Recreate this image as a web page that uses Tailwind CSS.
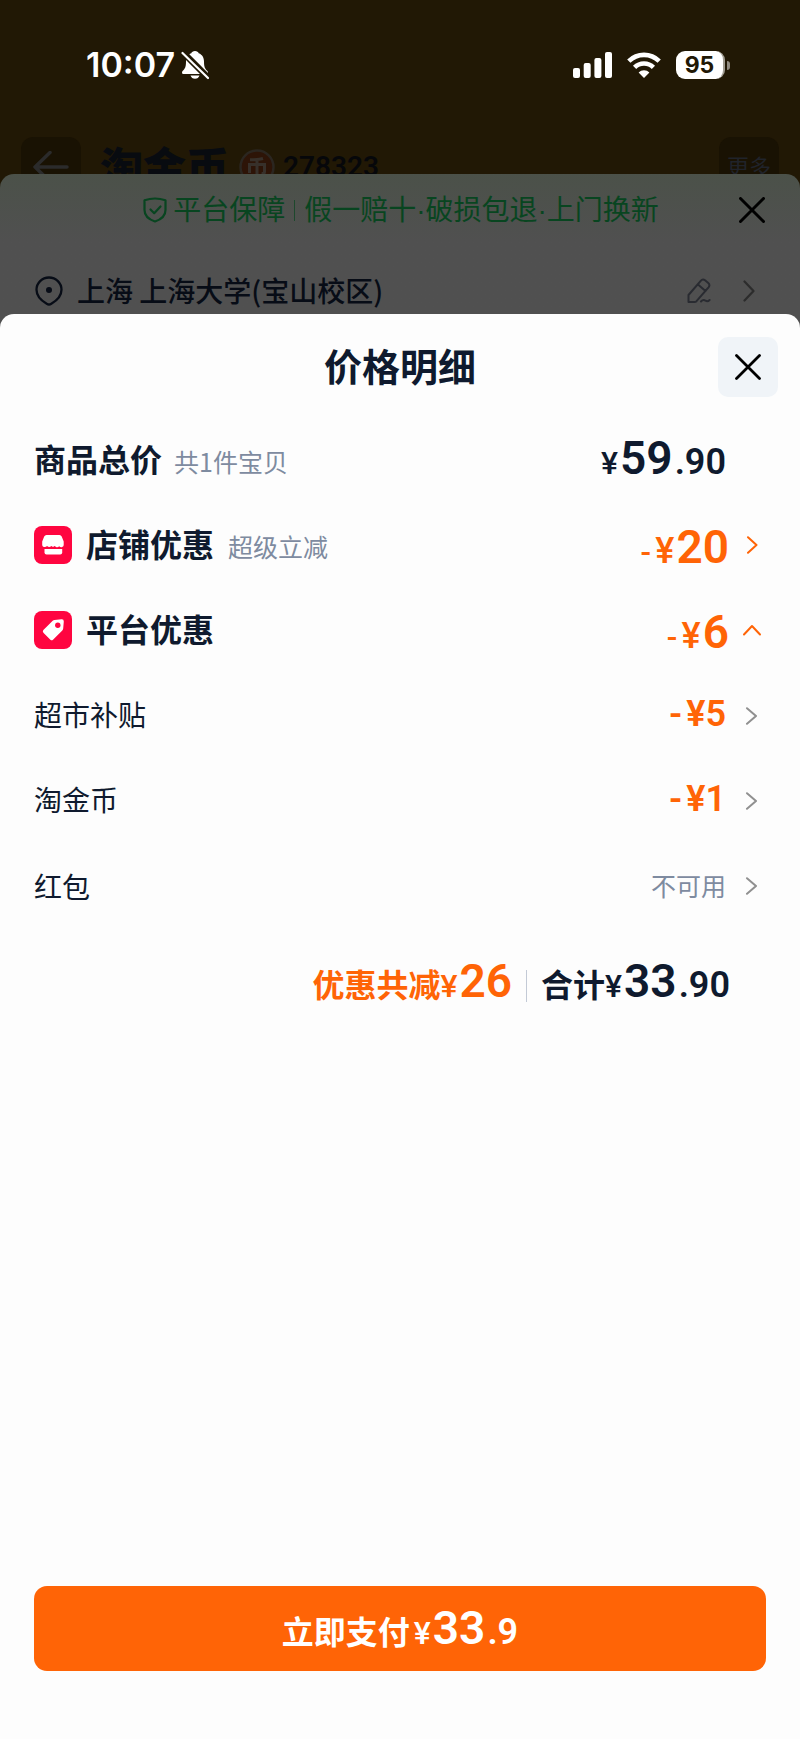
<!DOCTYPE html>
<html lang="zh-CN">
<head>
<meta charset="utf-8">
<meta name="viewport" content="width=device-width, initial-scale=1">
<title>价格明细</title>
<script src="https://cdn.jsdelivr.net/npm/@tailwindcss/browser@4"></script>
</head>
<body class="flex min-h-screen flex-col bg-[#211805] font-['Noto_Sans_CJK_SC',sans-serif] text-[#0f1a2e]">

<!-- Status bar and page header -->
<header class="h-[174px] shrink-0 overflow-hidden">
  <div class="flex h-[130px] items-center justify-between pr-[70px] pl-[86px] text-white">
    <div class="flex items-center gap-[6px]">
      <time class="font-['Inter',sans-serif] text-[34px] leading-none font-semibold">10:07</time>
      <svg class="h-[30px] w-[28px]" viewBox="0 0 28 30" role="img" aria-label="静音">
        <path d="M14 1c2 0 3.200 1 3.700 2.200C21.500 4.600 23 8 23 11.500c0 6 1.200 7.200 3.400 9.500.8.900 1 3-.7 3H2.300c-1.700 0-1.500-2.100-.7-3C3.800 18.700 5 17.500 5 11.500c0-3.500 1.500-6.900 5.300-8.300C10.800 2 12 1 14 1z" fill="#fff"/>
        <path d="M9.500 25.500h9c-.6 2-2.300 3.300-4.500 3.300s-3.900-1.300-4.500-3.300z" fill="#fff"/>
        <path d="M0 .5 28 28.500" stroke="#211805" stroke-width="6.500"/>
        <path d="M1.500 3 27 28" stroke="#fff" stroke-width="2.200" stroke-linecap="round"/>
      </svg>
    </div>
    <div class="flex items-center gap-[15px]">
      <svg class="h-[26px] w-[39px]" viewBox="0 0 39 26" fill="#fff" role="img" aria-label="信号">
        <rect x="0" y="16" width="7" height="10" rx="2"/><rect x="10.700" y="11" width="7" height="15" rx="2"/><rect x="21.400" y="6" width="7" height="20" rx="2"/><rect x="32" y="0" width="7" height="26" rx="2"/>
      </svg>
      <svg class="h-[26px] w-[34px]" viewBox="0 0 34 26" fill="none" stroke="#fff" stroke-width="4.600" role="img" aria-label="无线网络">
        <path d="M1.800 9.200a21.500 21.500 0 0 1 30.400 0"/>
        <path d="M7.600 15.400a13.300 13.300 0 0 1 18.800 0"/>
        <path d="M17 26l-5.400-5.400a7.600 7.600 0 0 1 10.800 0z" fill="#fff" stroke="none"/>
      </svg>
      <div class="flex items-center gap-[2px]">
        <div class="flex h-[28px] w-[49px] items-center justify-center rounded-[9px] border-r-2 border-[#a09c92] bg-white font-['Inter',sans-serif] text-[23px] leading-none font-bold text-[#211805]">95</div>
        <div class="h-[9px] w-[3px] rounded-r-full bg-[#8f8a80]"></div>
      </div>
    </div>
  </div>
  <div class="flex items-center justify-between px-[21px] pt-[7px]">
    <div class="flex items-center">
      <button class="flex size-[60px] items-center justify-center rounded-[12px] bg-[#191203]" aria-label="返回">
        <svg class="h-[32px] w-[36px]" viewBox="0 0 36 32" fill="none" stroke="#2b2b2b" stroke-width="3.500" stroke-linecap="round" stroke-linejoin="round"><path d="M17 1.500 2 16l15 14.500M2 16h32"/></svg>
      </button>
      <h1 class="ml-[19px] pb-1 text-[43px] leading-none font-black text-[#080b10]">淘金币</h1>
      <svg class="ml-[10px] size-[36px]" viewBox="0 0 36 36" fill="none">
        <circle cx="18" cy="18" r="16.500" fill="#2d1407" stroke="#2b2620" stroke-width="2.500"/>
        <path d="M24 9.500c-3 1-8 1.300-13 1.300M10.500 24V15.500h15V23q0 2-3 1.500M18 11v17" stroke="#37302a" stroke-width="3"/>
      </svg>
      <span class="ml-[8px] font-['Roboto',sans-serif] text-[28px] leading-none font-semibold text-[#06070a]">278323</span>
    </div>
    <button class="size-[60px] rounded-[12px] bg-[#191203] pb-1 text-[22px] leading-none text-[#20232a]">更多</button>
  </div>
</header>

<!-- Order sheet, dimmed behind the price sheet -->
<div class="flex grow flex-col rounded-t-[14px] bg-[#505050] bg-linear-to-b from-[#4b5149] from-0% to-[#505050] to-[68px]">
  <div class="flex h-[72px] items-center pr-[34px] pl-[34px]">
    <p class="flex grow items-center justify-center pl-[30px] font-['Liberation_Sans','Noto_Sans_CJK_SC',sans-serif] text-[28px] leading-none text-[#084520]">
      <svg class="mr-[6px] h-[26px] w-[24px]" viewBox="0 0 24 26" fill="none" stroke="currentColor" stroke-width="2.200" stroke-linejoin="round" stroke-linecap="round"><path d="M12 1.500c3 0 7 .6 10.500 1.800V13c0 6.500-4.500 9.500-10.500 11.500C6 22.500 1.500 19.500 1.500 13V3.300C5 2.100 9 1.500 12 1.500z"/><path d="m7.500 12.500 3.700 3.700 6.300-6.700"/></svg>
      <span class="pt-[2px]">平台保障</span>
      <span class="mx-[9px] h-[21px] w-px bg-[#084520]/70"></span>
      <span class="pt-[2px]">假一赔十·破损包退·上门换新</span>
    </p>
    <button class="flex w-[28px] justify-center" aria-label="关闭订单">
      <svg class="size-[26px]" viewBox="0 0 26 26" stroke="#000" stroke-width="3" stroke-linecap="round"><path d="M1.500 1.500l23 23M24.500 1.500l-23 23"/></svg>
    </button>
  </div>
  <a href="#address" class="flex h-[68px] items-center pt-[22px] pr-[34px] pl-[35px] text-[28px] leading-none font-medium text-[#070c16]">
    <svg class="h-[30px] w-[28px]" viewBox="0 0 28 30" fill="none"><path d="M14 1.500C7 1.500 1.500 7 1.500 13.800c0 6.700 4.500 10.700 10.200 14q2.300 1.400 4.600 0c5.700-3.300 10.200-7.300 10.200-14C26.500 7 21 1.500 14 1.500z" stroke="currentColor" stroke-width="2.300"/><circle cx="14" cy="14" r="3" fill="currentColor"/></svg>
    <span class="ml-[14px] grow pb-[2px]">上海 上海大学(宝山校区)</span>
    <svg class="h-[26px] w-[24px]" viewBox="0 0 24 26" fill="none" stroke="#292b31" stroke-width="2" stroke-linecap="round" stroke-linejoin="round"><path d="M1.500 24v-7L13.700 2.800q2-2.300 4.300-.5l3 2.500q2.500 2 .5 4.500L9.500 23.200q-.8.800-2 .8zM11 6.500l7.500 6.500M14 23.500q2.200-2.500 4.600-.8 2 1.300 4-.7"/></svg>
    <svg class="ml-[32px] h-[22px] w-[12px]" viewBox="0 0 12 22" fill="none" stroke="#2c2c2c" stroke-width="2.200" stroke-linecap="round" stroke-linejoin="round"><path d="M1.500 1.500 10.500 11l-9 9.500"/></svg>
    <span class="w-[11px]"></span>
  </a>

  <!-- Price detail sheet -->
  <main class="flex grow flex-col rounded-t-[14px] bg-[#fdfdfd] pt-[23px]">
    <div class="grid grid-cols-[60px_1fr_60px] items-center px-[22px]">
      <h2 class="col-start-2 pb-1 text-center text-[38px] leading-none font-bold">价格明细</h2>
      <button class="flex size-[60px] items-center justify-center rounded-[10px] bg-[#f0f4f8]" aria-label="关闭">
        <svg class="size-[26px]" viewBox="0 0 26 26" stroke="#000" stroke-width="2.800" stroke-linecap="round"><path d="M1.500 1.500l23 23M24.500 1.500l-23 23"/></svg>
      </button>
    </div>

    <div class="mt-[20px] flex flex-col px-[34px]">
      <div class="flex h-[85px] items-center pb-1">
        <p class="flex grow items-baseline gap-[12px] leading-none"><span class="text-[32px] font-bold">商品总价</span><span class="text-[25px] text-[#7e8ba0]">共1件宝贝</span></p>
        <p class="mr-[40px] flex items-baseline gap-[2px] font-['Roboto',sans-serif] text-[36px] leading-none font-semibold"><span class="text-[32px] font-medium">¥</span><span class="text-[46px]">59</span><span>.90</span></p>
      </div>
      <button class="flex h-[85px] items-center text-left">
        <svg class="size-[38px]" viewBox="0 0 38 38"><rect width="38" height="38" rx="8" fill="#ff0540"/><path d="M12.500 9h13q1.500 0 2.200 1.500l2 5v3.500q0 1.500-1.500 2-1.800.6-3-.8-1.400 1.400-3.100.8l-1.500-.9-1.600.9-1.600-.9q-2.300 1.700-4.300 0-1.700 1.500-3.300.8Q8.200 20.500 8.200 19v-3.500l2-5Q10.900 9 12.500 9z" fill="#fff"/><path d="M10.500 23h17.700v3.500q0 2-2 2H12.500q-2 0-2-2z" fill="#fff"/></svg>
        <span class="ml-[14px] flex grow items-baseline gap-[14px] pb-1 leading-none"><span class="text-[32px] font-bold">店铺优惠</span><span class="text-[25px] text-[#7e8ba0]">超级立减</span></span>
        <span class="flex items-baseline gap-[2px] pt-1 font-['Roboto',sans-serif] leading-none font-semibold text-[#ff6406]"><span class="mr-[2px] text-[30px]">-</span><span class="text-[36px] font-medium">¥</span><span class="text-[46px]">20</span></span>
        <svg class="ml-[9px] h-[18px] w-[28px]" viewBox="0 0 28 18" fill="none" stroke="#ff6406" stroke-width="2" stroke-linecap="round" stroke-linejoin="round"><path d="m10 1.200 8.500 7.800-8.500 7.800"/></svg>
      </button>
      <button class="flex h-[86px] items-center text-left" aria-expanded="true">
        <svg class="size-[38px]" viewBox="0 0 38 38"><rect width="38" height="38" rx="8" fill="#ff0540"/><path d="M20.500 9 27.500 8.300q2.400-.2 2.300 2.200l-.6 7q-.1 1.100-.9 1.900l-9.300 9.300q-1.300 1.200-2.600 0l-7-7q-1.200-1.300 0-2.600l9.300-9.300q.8-.7 1.800-.8z" fill="#fff"/><circle cx="23.800" cy="14.300" r="2.700" fill="#ff0540"/></svg>
        <span class="ml-[14px] grow pb-1 text-[32px] leading-none font-bold">平台优惠</span>
        <span class="flex items-baseline gap-[2px] pt-1 font-['Roboto',sans-serif] leading-none font-semibold text-[#ff6406]"><span class="mr-[2px] text-[30px]">-</span><span class="text-[36px] font-medium">¥</span><span class="text-[46px]">6</span></span>
        <svg class="ml-[9px] h-[18px] w-[28px]" viewBox="0 0 28 18" fill="none" stroke="#ff6406" stroke-width="2" stroke-linecap="round" stroke-linejoin="round"><path d="M6 13.500 14 5l8 8.500"/></svg>
      </button>
      <button class="flex h-[85px] items-center text-left">
        <span class="grow pb-1 text-[28px] leading-none">超市补贴</span>
        <span class="flex items-baseline pb-1 font-['Roboto',sans-serif] text-[36px] leading-none font-semibold text-[#ff6406]"><span class="mr-[4px]">-</span><span>¥5</span></span>
        <svg class="ml-[12px] h-[18px] w-[28px]" viewBox="0 0 28 18" fill="none" stroke="#909090" stroke-width="2" stroke-linecap="round" stroke-linejoin="round"><path d="m9 1.200 9 7.800-9 7.800"/></svg>
      </button>
      <button class="flex h-[85px] items-center text-left">
        <span class="grow pb-1 text-[28px] leading-none">淘金币</span>
        <span class="flex items-baseline pb-1 font-['Roboto',sans-serif] text-[36px] leading-none font-semibold text-[#ff6406]"><span class="mr-[4px]">-</span><span>¥1</span></span>
        <svg class="ml-[12px] h-[18px] w-[28px]" viewBox="0 0 28 18" fill="none" stroke="#909090" stroke-width="2" stroke-linecap="round" stroke-linejoin="round"><path d="m9 1.200 9 7.800-9 7.800"/></svg>
      </button>
      <button class="flex h-[85px] items-center text-left">
        <span class="grow text-[28px] leading-none">红包</span>
        <span class="text-[25px] leading-none text-[#7e8ba0]">不可用</span>
        <svg class="ml-[12px] h-[18px] w-[28px]" viewBox="0 0 28 18" fill="none" stroke="#909090" stroke-width="2" stroke-linecap="round" stroke-linejoin="round"><path d="m9 1.200 9 7.800-9 7.800"/></svg>
      </button>
    </div>

    <div class="mt-[10px] flex h-[85px] items-center justify-end pr-[70px] text-[32px] leading-none font-bold">
      <p class="flex items-baseline text-[#ff6406]">优惠共减<span class="flex items-baseline gap-[2px] font-['Roboto',sans-serif] font-semibold"><span class="text-[32px] font-medium">¥</span><span class="text-[46px]">26</span></span></p>
      <span class="mx-[14px] mt-[10px] h-[32px] w-px bg-[#c3cad6]"></span>
      <p class="flex items-baseline">合计<span class="flex items-baseline gap-[2px] font-['Roboto',sans-serif] font-semibold"><span class="text-[32px] font-medium">¥</span><span class="text-[46px]">33</span><span class="text-[36px]">.90</span></span></p>
    </div>

    <div class="mt-auto px-[34px] pb-[68px]">
      <button class="flex h-[85px] w-full items-center justify-center rounded-[13px] bg-[#ff6406] text-white">
        <span class="flex items-baseline pb-[2px] text-[32px] leading-none font-bold">立即支付<span class="ml-[4px] flex items-baseline gap-[2px] font-['Roboto',sans-serif] font-semibold"><span class="text-[32px] font-medium">¥</span><span class="text-[46px]">33</span><span class="text-[36px]">.9</span></span></span>
      </button>
    </div>
  </main>
</div>
</body>
</html>
